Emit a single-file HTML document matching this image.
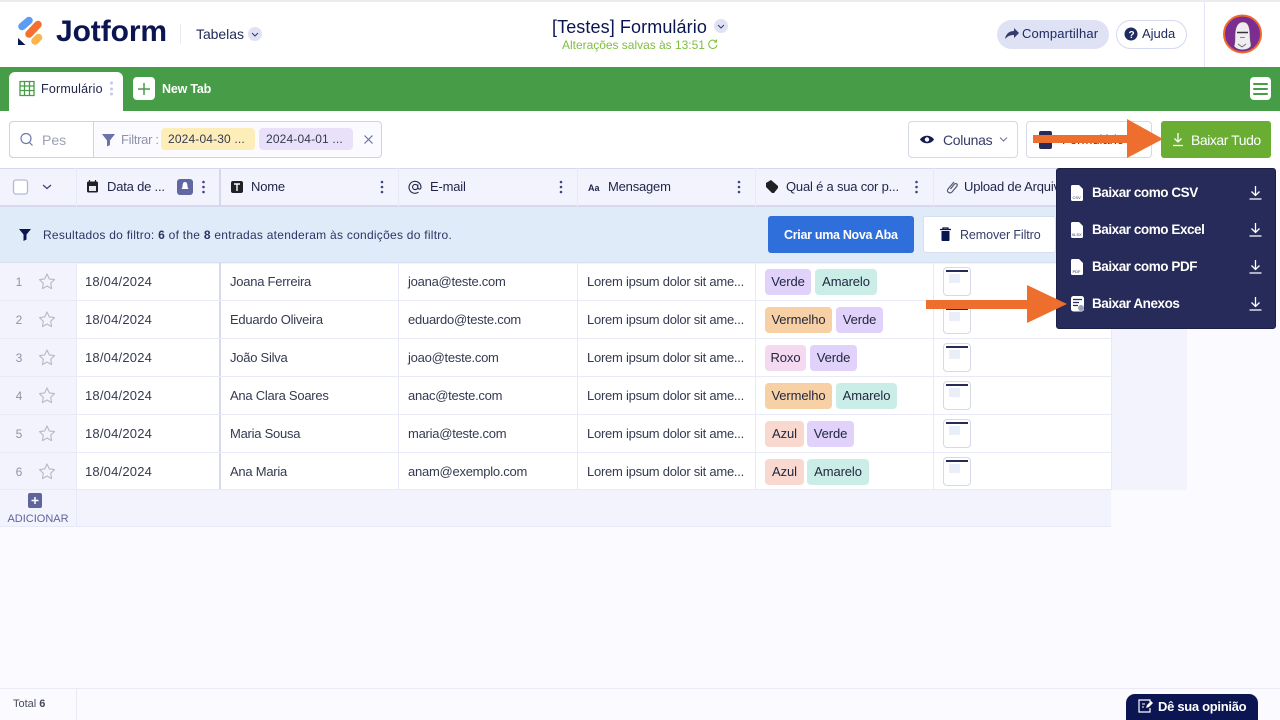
<!DOCTYPE html>
<html><head><meta charset="utf-8"><title>Jotform Tabelas</title>
<style>
*{box-sizing:border-box}
html{margin:0;padding:0;width:1280px;height:720px;overflow:hidden}
body{margin:0;padding:0;width:1280px;height:720px;overflow:hidden;position:relative;background:#fbfbff;font-family:"Liberation Sans",sans-serif;font-size:13px;color:#2c3345}
.a{position:absolute}
.t{position:absolute;white-space:nowrap;line-height:16px}
.pill{position:absolute;height:26px;line-height:26px;border-radius:4px;text-align:center;font-size:13px;color:#22273f;letter-spacing:-.1px}
.v{background:#e0d2fa}.m{background:#caeee7}.o{background:#f8d0a5}.r{background:#f5d9f1}.z{background:#f9d8d0}
.c{position:absolute;font-size:13px;color:#343a50;white-space:nowrap;line-height:16px;letter-spacing:-.25px}
.d{letter-spacing:.2px}
.h{position:absolute;top:179px;font-size:13px;color:#1f2447;white-space:nowrap;line-height:16px;letter-spacing:-.2px}
.vl{position:absolute;width:1px;background:#e7e8f8}
.hl{position:absolute;left:0;width:1111px;height:1px;background:#e9eaf8}
.idx{position:absolute;left:0;width:38px;text-align:center;color:#8f93a8;font-size:12px;line-height:16px}
.th{position:absolute;left:943px;width:28px;height:29px;background:#fff;border:1px solid #d5d8e6;border-radius:4px}
.th:before{content:"";position:absolute;left:2px;right:2px;top:2px;height:2px;background:#272b5a}
.th:after{content:"";position:absolute;left:5px;top:6px;width:11px;height:9px;background:#eaeef8}
.mi{position:absolute;left:1092px;color:#fff;font-size:13.5px;font-weight:bold;line-height:16px;white-space:nowrap;letter-spacing:-.45px}
</style></head><body>

<!-- top bar -->
<div class="a" style="left:0;top:0;width:1280px;height:67px;background:#fff;border-top:2px solid #ececee"></div>
<div class="a" style="left:1204px;top:2px;width:1px;height:65px;background:#e3e5f5"></div>
<div class="a" style="left:180px;top:24px;width:1px;height:20px;background:#e8e9f2"></div>
<div class="t" style="left:56px;top:14px;font-size:30px;line-height:36px;font-weight:bold;color:#0a1551;letter-spacing:-.1px">Jotform</div>
<div class="t" style="left:196px;top:26px;font-size:14px;color:#1f2a55;letter-spacing:-.05px">Tabelas</div>
<div class="t" style="left:552px;top:17px;font-size:18px;line-height:20px;color:#0a1551;letter-spacing:.1px">[Testes] Formulário</div>
<div class="t" style="left:562px;top:37px;font-size:12px;color:#7fbe3f;letter-spacing:-.02px">Alterações salvas às 13:51</div>
<div class="a" style="left:997px;top:20px;width:112px;height:29px;border-radius:15px;background:#dfe1f5"></div>
<div class="t" style="left:1022px;top:26px;font-size:13px;color:#1f2a60;letter-spacing:.15px">Compartilhar</div>
<div class="a" style="left:1116px;top:20px;width:71px;height:29px;border-radius:15px;background:#fff;border:1px solid #d6d9f2"></div>
<div class="t" style="left:1142px;top:26px;font-size:13px;color:#1f2a60">Ajuda</div>

<!-- green bar -->
<div class="a" style="left:0;top:67px;width:1280px;height:44px;background:#479c47"></div>
<div class="a" style="left:9px;top:72px;width:114px;height:39px;background:#fff;border-radius:6px 6px 0 0"></div>
<div class="t" style="left:41px;top:81px;font-size:12.5px;color:#1f2447;letter-spacing:.2px">Formulário</div>
<div class="a" style="left:133px;top:77px;width:22px;height:23px;background:#fff;border-radius:4px"></div>
<div class="t" style="left:162px;top:81px;font-size:12.5px;font-weight:bold;color:#fff;letter-spacing:-.2px">New Tab</div>
<div class="a" style="left:1250px;top:77px;width:21px;height:23px;background:#fff;border-radius:4px"></div>

<!-- toolbar -->
<div class="a" style="left:0;top:111px;width:1280px;height:57px;background:#fff"></div>
<div class="a" style="left:9px;top:121px;width:373px;height:37px;background:#fbfbff;border:1px solid #cfd2e2;border-radius:4px"></div>
<div class="a" style="left:9px;top:121px;width:85px;height:37px;background:#fff;border:1px solid #cfd2e2;border-radius:4px 0 0 4px"></div>
<div class="t" style="left:42px;top:132px;font-size:14px;color:#9ba0b4">Pes</div>
<div class="t" style="left:121px;top:132px;font-size:13px;color:#8f94ab;letter-spacing:-.3px">Filtrar :</div>
<div class="a" style="left:161px;top:128px;width:94px;height:22px;background:#fdedb8;border-radius:4px"></div>
<div class="t" style="left:168px;top:131px;font-size:12px;color:#343a50;letter-spacing:.15px">2024-04-30 ...</div>
<div class="a" style="left:259px;top:128px;width:94px;height:22px;background:#e9e1fa;border-radius:4px"></div>
<div class="t" style="left:266px;top:131px;font-size:12px;color:#343a50;letter-spacing:.15px">2024-04-01 ...</div>

<div class="a" style="left:908px;top:121px;width:110px;height:37px;background:#fff;border:1px solid #d5d8e6;border-radius:4px"></div>
<div class="t" style="left:943px;top:132px;font-size:14px;color:#343c6a;letter-spacing:-.3px">Colunas</div>
<div class="a" style="left:1026px;top:121px;width:126px;height:37px;background:#fff;border:1px solid #d5d8e6;border-radius:4px"></div>
<div class="a" style="left:1039px;top:131px;width:13px;height:18px;background:#272b5a;border-radius:2px"></div>
<div class="t" style="left:1062px;top:132px;font-size:13px;color:#343c6a">Formulário</div>
<div class="a" style="left:1161px;top:121px;width:110px;height:37px;background:#69ae33;border-radius:3px"></div>
<div class="t" style="left:1191px;top:132px;font-size:14px;color:#fff;letter-spacing:-.45px">Baixar Tudo</div>

<!-- table bg -->
<div class="a" style="left:0;top:168px;width:1187px;height:322px;background:#f3f3fe"></div>
<div class="a" style="left:0;top:490px;width:1111px;height:37px;background:#f3f3fe"></div>
<div class="a" style="left:76px;top:264px;width:1035px;height:226px;background:#fff"></div>
<div class="a" style="left:0;top:168px;width:1187px;height:1px;background:#d6d9ee"></div>
<div class="a" style="left:0;top:205px;width:1187px;height:2px;background:#d6d9ee"></div>
<div class="a" style="left:0;top:526px;width:1111px;height:1px;background:#e7e8f8"></div>

<div class="vl" style="left:76px;top:168px;height:359px"></div>
<div class="a" style="left:219px;top:168px;width:2px;height:322px;background:#d6d9ee"></div>
<div class="vl" style="left:398px;top:168px;height:322px"></div>
<div class="vl" style="left:577px;top:168px;height:322px"></div>
<div class="vl" style="left:755px;top:168px;height:322px"></div>
<div class="vl" style="left:933px;top:168px;height:322px"></div>
<div class="vl" style="left:1111px;top:168px;height:322px"></div>
<div class="hl" style="top:300px"></div><div class="hl" style="top:338px"></div><div class="hl" style="top:376px"></div><div class="hl" style="top:414px"></div><div class="hl" style="top:452px"></div><div class="hl" style="top:489px"></div>

<!-- headers -->
<div class="h" style="left:107px">Data de ...</div>
<div class="h" style="left:251px">Nome</div>
<div class="h" style="left:430px">E-mail</div>
<div class="h" style="left:608px">Mensagem</div>
<div class="h" style="left:786px">Qual é a sua cor p...</div>
<div class="h" style="left:964px">Upload de Arquivo</div>

<!-- filter banner -->
<div class="a" style="left:0;top:207px;width:1187px;height:56px;background:#e0ebf9;border-bottom:1px solid #d9e0f0"></div>
<div class="t" style="left:43px;top:227px;font-size:12px;color:#2b3563;letter-spacing:.26px">Resultados do filtro: <b>6</b> of the <b>8</b> entradas atenderam às condições do filtro.</div>
<div class="a" style="left:768px;top:216px;width:146px;height:37px;background:#2f6fdb;border-radius:3px"></div>
<div class="t" style="left:784px;top:227px;font-size:12.5px;font-weight:bold;color:#fff;letter-spacing:-.3px">Criar uma Nova Aba</div>
<div class="a" style="left:923px;top:216px;width:133px;height:37px;background:#fff;border-radius:3px;border:1px solid #d8deee"></div>
<div class="t" style="left:960px;top:227px;font-size:12.5px;color:#343c6a;letter-spacing:-.1px">Remover Filtro</div>

<!-- rows -->
<div class="idx" style="top:274px">1</div><div class="idx" style="top:312px">2</div><div class="idx" style="top:350px">3</div><div class="idx" style="top:388px">4</div><div class="idx" style="top:426px">5</div><div class="idx" style="top:464px">6</div>

<div class="c d" style="left:85px;top:274px">18/04/2024</div><div class="c" style="left:230px;top:274px">Joana Ferreira</div><div class="c" style="left:408px;top:274px">joana@teste.com</div><div class="c" style="left:587px;top:274px">Lorem ipsum dolor sit ame...</div>
<div class="c d" style="left:85px;top:312px">18/04/2024</div><div class="c" style="left:230px;top:312px">Eduardo Oliveira</div><div class="c" style="left:408px;top:312px">eduardo@teste.com</div><div class="c" style="left:587px;top:312px">Lorem ipsum dolor sit ame...</div>
<div class="c d" style="left:85px;top:350px">18/04/2024</div><div class="c" style="left:230px;top:350px">João Silva</div><div class="c" style="left:408px;top:350px">joao@teste.com</div><div class="c" style="left:587px;top:350px">Lorem ipsum dolor sit ame...</div>
<div class="c d" style="left:85px;top:388px">18/04/2024</div><div class="c" style="left:230px;top:388px">Ana Clara Soares</div><div class="c" style="left:408px;top:388px">anac@teste.com</div><div class="c" style="left:587px;top:388px">Lorem ipsum dolor sit ame...</div>
<div class="c d" style="left:85px;top:426px">18/04/2024</div><div class="c" style="left:230px;top:426px">Maria Sousa</div><div class="c" style="left:408px;top:426px">maria@teste.com</div><div class="c" style="left:587px;top:426px">Lorem ipsum dolor sit ame...</div>
<div class="c d" style="left:85px;top:464px">18/04/2024</div><div class="c" style="left:230px;top:464px">Ana Maria</div><div class="c" style="left:408px;top:464px">anam@exemplo.com</div><div class="c" style="left:587px;top:464px">Lorem ipsum dolor sit ame...</div>

<div class="pill v" style="left:765px;top:269px;width:46px">Verde</div><div class="pill m" style="left:815px;top:269px;width:62px">Amarelo</div>
<div class="pill o" style="left:765px;top:307px;width:67px">Vermelho</div><div class="pill v" style="left:836px;top:307px;width:47px">Verde</div>
<div class="pill r" style="left:765px;top:345px;width:41px">Roxo</div><div class="pill v" style="left:810px;top:345px;width:47px">Verde</div>
<div class="pill o" style="left:765px;top:383px;width:67px">Vermelho</div><div class="pill m" style="left:836px;top:383px;width:61px">Amarelo</div>
<div class="pill z" style="left:765px;top:421px;width:39px">Azul</div><div class="pill v" style="left:807px;top:421px;width:47px">Verde</div>
<div class="pill z" style="left:765px;top:459px;width:39px">Azul</div><div class="pill m" style="left:807px;top:459px;width:62px">Amarelo</div>

<div class="th" style="top:267px"></div><div class="th" style="top:305px"></div><div class="th" style="top:343px"></div><div class="th" style="top:381px"></div><div class="th" style="top:419px"></div><div class="th" style="top:457px"></div>

<div class="t" style="left:0;width:76px;text-align:center;top:511px;font-size:11px;color:#5f649c">ADICIONAR</div>

<!-- footer -->
<div class="a" style="left:0;top:688px;width:1280px;height:1px;background:#e9eaf4"></div>
<div class="a" style="left:76px;top:688px;width:1px;height:32px;background:#e9eaf4"></div>
<div class="t" style="left:13px;top:696px;font-size:11px;color:#44495f">Total <b>6</b></div>
<div class="a" style="left:1126px;top:694px;width:132px;height:26px;background:#0a1551;border-radius:9px 9px 0 0"></div>
<div class="t" style="left:1158px;top:699px;font-size:13px;font-weight:bold;color:#fff;letter-spacing:-.3px">Dê sua opinião</div>

<!-- dropdown -->
<div class="a" style="left:1056px;top:168px;width:220px;height:161px;background:#272b5a;border-radius:3px;border:1px solid #1c2048"></div>
<div class="mi" style="top:185px">Baixar como CSV</div>
<div class="mi" style="top:222px">Baixar como Excel</div>
<div class="mi" style="top:259px">Baixar como PDF</div>
<div class="mi" style="top:296px">Baixar Anexos</div>

<!-- icons -->
<svg class="a" style="left:0;top:0" width="1280" height="720" viewBox="0 0 1280 720" fill="none">
<!-- logo -->
<path d="M22 26.500 L29 20.500" stroke="#5d9cf5" stroke-width="7.500" stroke-linecap="round"/>
<path d="M29 34 L38 24.500" stroke="#f4702e" stroke-width="7.500" stroke-linecap="round"/>
<path d="M35 41 L38.500 37.500" stroke="#fbb44c" stroke-width="7.500" stroke-linecap="round"/>
<path d="M18 38 L18 45 L25.500 45 Z" fill="#0a1551"/>
<!-- chevrons circles -->
<circle cx="255" cy="34" r="7" fill="#e0e2f4"/><path d="M252 33l3 3 3-3" stroke="#343c6a" stroke-width="1"/>
<circle cx="721" cy="26" r="7" fill="#e0e2f4"/><path d="M718 25l3 3 3-3" stroke="#343c6a" stroke-width="1"/>
<path d="M716 41.500A4.200 4.200 0 1 0 717 45M716.500 39.500v2.500h-2.500" stroke="#7fbe3f" stroke-width="1"/>
<!-- share -->
<path d="M1005 39c1-6 5-8 9-8v-3l5 5-5 5v-3c-4 0-6 1-9 4z" fill="#343c6a"/>
<circle cx="1131" cy="34" r="6.500" fill="#1f2a60"/><text x="1128.500" y="38" font-size="10" font-weight="bold" fill="#fff" font-family="Liberation Sans">?</text>
<!-- avatar -->
<circle cx="1242.500" cy="34" r="18.500" fill="#7b2d92" stroke="#ee6a2c" stroke-width="2"/>
<path d="M1234 46c1-3 1-5 1-10 0-9 3-14 8-14s7 5 7 14c0 5 1 7 1 10-3 5-14 5-17 0z" fill="#f0ecf2" stroke="#555" stroke-width=".5"/>
<path d="M1237 32.500h11" stroke="#333" stroke-width="1.500"/>
<path d="M1240 37.500h5M1238 44l4 3 4-3" stroke="#666" stroke-width=".8"/>
<!-- tab grid -->
<path d="M20 81.500h14v14h-14zM20 86h14M20 90.500h14M24.500 81.500v14M29.500 81.500v14" stroke="#479c47" stroke-width="1.300"/>
<circle cx="111.500" cy="83" r="1.500" fill="#c3c7e8"/><circle cx="111.500" cy="89" r="1.500" fill="#c3c7e8"/><circle cx="111.500" cy="94" r="1.500" fill="#c3c7e8"/>
<path d="M144 83v12M138 89h12" stroke="#479c47" stroke-width="1.500"/>
<path d="M1254 84h13M1254 89h13M1254 94h13" stroke="#479c47" stroke-width="2" stroke-linecap="round"/>
<!-- search/filter -->
<circle cx="26" cy="138.500" r="5" stroke="#6d7bb0" stroke-width="1.200"/><path d="M29.500 142.500l3 3" stroke="#6d7bb0" stroke-width="1.200"/>
<path d="M102 134h13l-5 6.500v4.500l-3 1.500v-6z" fill="#6a72a8"/>
<path d="M364.500 135.500l8 8M372.500 135.500l-8 8" stroke="#6a72a8" stroke-width="1.200"/>
<!-- columns -->
<path d="M920 139.500c3-5 11-5 14 0-3 5-11 5-14 0z" fill="#141c50"/><circle cx="927" cy="139.500" r="2.200" fill="#fff"/>
<path d="M1000 137.500l3.500 3.500 3.500-3.500" stroke="#6d7390" stroke-width="1"/>
<!-- baixar tudo icon -->
<path d="M1178 133v9M1174.500 138.500l3.500 3.500 3.500-3.500M1173 145.500h10" stroke="#fff" stroke-width="1.300"/>
<!-- header icons -->
<rect x="13.500" y="180" width="14" height="14" rx="2.500" fill="#fff" stroke="#b4b8d2" stroke-width="1.300"/>
<path d="M43 185l4 3.500 4-3.500" stroke="#3d4680" stroke-width="1.300"/>
<rect x="87" y="181.500" width="11" height="11" rx="1.500" fill="#1f2126"/><path d="M89.500 180v3M95.500 180v3" stroke="#1f2126" stroke-width="1.200"/><rect x="89" y="186" width="7" height="5" fill="#e9e9ef"/>
<rect x="177" y="179" width="16" height="16" rx="3" fill="#6067a3"/><path d="M185 182c-2 0-2.500 2-2.500 5l-1 2h7l-1-2c0-3-.5-5-2.500-5z" fill="#fff"/>
<rect x="231" y="181" width="12" height="12" rx="2" fill="#1f2126"/><path d="M234 184h6M237 184v7" stroke="#fff" stroke-width="1.400"/>
<path d="M418.500 192.200A6 6 0 1 1 421 187c0 2.800-3.200 2.800-3.200 0v-2.500M417.800 187a2.600 2.600 0 1 1-5.200 0 2.600 2.600 0 0 1 5.200 0z" stroke="#1f2447" stroke-width="1.100"/>
<text x="588" y="191" font-size="9" font-weight="bold" fill="#1f2447" font-family="Liberation Sans">Aa</text>
<path d="M766 183l5-3 7 6v2l-4 5h-2l-6-6z" fill="#1f2126"/>
<path d="M954 182l-6 7c-2 3 2 5 4 3l5-6c1-2-1-3-2.500-2l-4 5" stroke="#555a70" stroke-width="1.200"/>
<g fill="#3d4680">
<circle cx="203.500" cy="182" r="1.300"/><circle cx="203.500" cy="187" r="1.300"/><circle cx="203.500" cy="192" r="1.300"/>
<circle cx="382" cy="182" r="1.300"/><circle cx="382" cy="187" r="1.300"/><circle cx="382" cy="192" r="1.300"/>
<circle cx="561" cy="182" r="1.300"/><circle cx="561" cy="187" r="1.300"/><circle cx="561" cy="192" r="1.300"/>
<circle cx="739" cy="182" r="1.300"/><circle cx="739" cy="187" r="1.300"/><circle cx="739" cy="192" r="1.300"/>
<circle cx="916.500" cy="182" r="1.300"/><circle cx="916.500" cy="187" r="1.300"/><circle cx="916.500" cy="192" r="1.300"/>
</g>
<!-- banner icons -->
<path d="M19 229h12l-4.500 5.500v5l-3 1.500v-6.500z" fill="#0a1551"/>
<path d="M940 229.500h11M943 229.500v-1.500h5v1.500" stroke="#0a1551" stroke-width="1.300"/><path d="M941.500 231h8v9c0 .8-.5 1-1 1h-6c-.5 0-1-.2-1-1z" fill="#0a1551"/>
<!-- stars -->
<g stroke="#b6b9c8" stroke-width="1.100" stroke-linejoin="round">
<path d="M47 274l2.300 4.900 5.200.7-3.800 3.700.9 5.300-4.600-2.600-4.600 2.600.9-5.300-3.800-3.700 5.200-.7z"/>
<path transform="translate(0,38)" d="M47 274l2.300 4.900 5.200.7-3.800 3.700.9 5.300-4.600-2.600-4.600 2.600.9-5.300-3.800-3.700 5.200-.7z"/>
<path transform="translate(0,76)" d="M47 274l2.300 4.900 5.200.7-3.800 3.700.9 5.300-4.600-2.600-4.600 2.600.9-5.300-3.800-3.700 5.200-.7z"/>
<path transform="translate(0,114)" d="M47 274l2.300 4.900 5.200.7-3.800 3.700.9 5.300-4.600-2.600-4.600 2.600.9-5.300-3.800-3.700 5.200-.7z"/>
<path transform="translate(0,152)" d="M47 274l2.300 4.900 5.200.7-3.800 3.700.9 5.300-4.600-2.600-4.600 2.600.9-5.300-3.800-3.700 5.200-.7z"/>
<path transform="translate(0,190)" d="M47 274l2.300 4.900 5.200.7-3.800 3.700.9 5.300-4.600-2.600-4.600 2.600.9-5.300-3.800-3.700 5.200-.7z"/>
</g>
<!-- add -->
<rect x="28" y="493" width="14" height="15" rx="2" fill="#5f649c"/><path d="M35 497v7M31.500 500.500h7" stroke="#fff" stroke-width="1.500"/>
<!-- feedback icon -->
<path d="M1150 702v-2h-11v12h11v-4" stroke="#fff" stroke-width="1.200"/><path d="M1142 704h3M1142 707h2" stroke="#fff" stroke-width="1"/><path d="M1146 708l1-3 4-4 2 2-4 4z" fill="#fff"/>
<!-- dropdown icons -->
<g fill="#fff">
<path d="M1072.500 185h6.500l4 4v10.500a1.500 1.500 0 0 1-1.500 1.500h-9a1.500 1.500 0 0 1-1.500-1.500v-13a1.500 1.500 0 0 1 1.500-1.500z"/>
<path d="M1072.500 222h6.500l4 4v10.500a1.500 1.500 0 0 1-1.500 1.500h-9a1.500 1.500 0 0 1-1.500-1.500v-13a1.500 1.500 0 0 1 1.500-1.500z"/>
<path d="M1072.500 259h6.500l4 4v10.500a1.500 1.500 0 0 1-1.500 1.500h-9a1.500 1.500 0 0 1-1.500-1.500v-13a1.500 1.500 0 0 1 1.500-1.500z"/>
<rect x="1071" y="296" width="13" height="15.500" rx="2.500"/>
</g>
<g fill="#272b5a" font-family="Liberation Sans" font-size="4">
<text x="1072.500" y="199">CSV</text><text x="1071.500" y="236">XLSX</text><text x="1072.500" y="273">PDF</text>
</g>
<path d="M1073 299.500h9M1073 302.500h6M1073 305.500h5" stroke="#272b5a" stroke-width="1.200"/>
<circle cx="1081" cy="308" r="3" fill="#9aa0b8"/>
<g stroke="#fff" stroke-width="1.300">
<path d="M1255.500 186v9M1251.500 191.500l4 4 4-4M1249.500 199h12"/>
<path d="M1255.500 223v9M1251.500 228.500l4 4 4-4M1249.500 236h12"/>
<path d="M1255.500 260v9M1251.500 265.500l4 4 4-4M1249.500 273h12"/>
<path d="M1255.500 297v9M1251.500 302.500l4 4 4-4M1249.500 310h12"/>
</g>
<!-- orange arrows -->
<path d="M1033 135h94v-16l36 20-36 19v-15h-94z" fill="#ee6f2d"/>
<path d="M926 300h101v-15l40 19-40 19v-14h-101z" fill="#ee6f2d"/>
</svg>
</body></html>
